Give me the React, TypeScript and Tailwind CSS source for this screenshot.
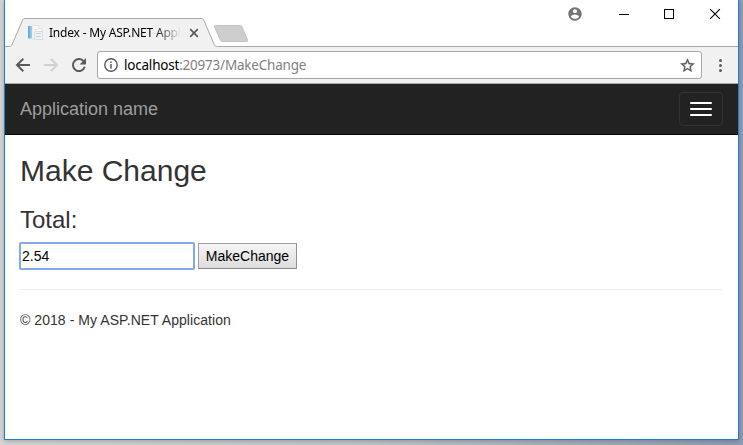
function TabStrip() {
  return (
    <div className="relative h-[47px] shrink-0 bg-white">
      <svg className="absolute inset-0" width="733" height="47" viewBox="5 0 733 47" fill="none">
        <path d="M5 47V46.5H9C11 46.5 11.6 45.6 12.3 44L22.5 20.3C23.1 19 23.6 18.5 25 18.5H201C202.6 18.5 203.2 19 203.8 20.3L214 44C214.8 45.8 215.4 46.5 217.5 46.5H738V47Z" fill="#f1f1f1" />
        <path d="M5 46.5H9C11 46.5 11.6 45.6 12.3 44L22.5 20.3C23.1 19 23.6 18.5 25 18.5H201C202.6 18.5 203.2 19 203.8 20.3L214 44C214.8 45.8 215.4 46.5 217.5 46.5H738" stroke="#a9a9a9" />
        <path d="M215.5 25.5H239.5C241 25.5 241.6 26 242.1 27L247.5 40C247.9 41 247.6 41.5 246.5 41.5H223C221.5 41.5 220.8 41 220.3 40L214.6 27C214.2 26 214.4 25.5 215.5 25.5Z" fill="#cecece" stroke="#c2c2c2" />
      </svg>
      <div className="relative flex h-[29px] w-[177px] translate-y-[18px] items-center pl-[23px]">
        <svg width="15" height="16" viewBox="0 0 15 16" className="shrink-0">
          <defs>
            <linearGradient id="spine" x1="0" y1="0" x2="1" y2="0">
              <stop offset="0" stopColor="#5ba4da" />
              <stop offset="1" stopColor="#a5d0ef" />
            </linearGradient>
          </defs>
          <path d="M4 .5h7l3 3V14H4z" fill="#f5f7f9" stroke="#e2e6ea" />
          <path d="M11 .5v3h3" fill="#fff" stroke="#d8dee3" />
          <rect x="0" y="1" width="4" height="12.5" fill="url(#spine)" />
          <path d="M5.5 4.5h4" stroke="#dbe1e6" />
          <rect x="6.5" y="6.5" width="8" height="8" fill="#f0f3f5" stroke="#d8dde2" />
          <path d="M8 8.5h5M8 11.5h5" stroke="#c8d0d7" />
        </svg>
        <span className="ml-[6px] shrink-0 whitespace-nowrap bg-linear-to-r from-black from-80% to-transparent bg-clip-text font-['Noto_Sans',sans-serif] text-[12px] leading-[16px] tracking-[-0.2px] text-transparent">
          Index - My ASP.NET Appl
        </span>
      </div>
      <svg className="absolute left-[184px] top-[28px]" width="10" height="10" viewBox="0 0 10 10">
        <path d="M1.2 1.2L8.8 8.8M8.8 1.2L1.2 8.8" stroke="#5a5a5a" strokeWidth="1.7" />
      </svg>
      <svg className="absolute left-[562px] top-[6px]" width="16" height="16" viewBox="0 0 24 24">
        <path fill="#757575" d="M12 2C6.48 2 2 6.48 2 12s4.48 10 10 10 10-4.48 10-10S17.52 2 12 2zm0 3c1.66 0 3 1.34 3 3s-1.34 3-3 3-3-1.34-3-3 1.34-3 3-3zm0 14.2c-2.5 0-4.71-1.28-6-3.22.03-1.99 4-3.08 6-3.08 1.99 0 5.97 1.09 6 3.08-1.29 1.94-3.5 3.22-6 3.22z" />
      </svg>
      <svg className="absolute left-[613px] top-[8px]" width="104" height="12" viewBox="0 0 104 12" fill="none" stroke="#000">
        <path d="M1 6.5h10" />
        <rect x="46.5" y="1.5" width="9" height="9" />
        <path d="M92.1 1.1l9.8 9.8M101.9 1.1l-9.8 9.8" strokeWidth="1.1" />
      </svg>
    </div>
  );
}

function Toolbar() {
  return (
    <div className="flex h-[37px] shrink-0 items-center border-b border-[#a9a9a9] bg-[#f1f1f1]">
      <svg width="92" height="36" viewBox="5 47 92 36" fill="none" strokeWidth="2" className="shrink-0">
        <path d="M30 65H17.5M23.3 58.7L17 65L23.3 71.3" stroke="#5a5a5a" />
        <path d="M44 65H56.5M50.7 58.7L57 65L50.7 71.3" stroke="#d2d2d2" />
        <path d="M83.8 61.5A6 6 0 1 0 84.7 66.7" stroke="#5a5a5a" />
        <path d="M86 58v6.4h-6.4z" fill="#5a5a5a" />
      </svg>
      <div className="flex h-[28px] w-[605px] items-center rounded-[3px] border border-[#a6a6a6] bg-white pl-[6px] pr-[5px]">
        <svg width="14" height="14" viewBox="0 0 14 14" fill="none" className="shrink-0">
          <circle cx="7" cy="7" r="6.2" stroke="#5a5a5a" strokeWidth="1.4" />
          <path d="M7 6v4.5M7 3.4v1.5" stroke="#5a5a5a" strokeWidth="1.5" />
        </svg>
        <span className="ml-[6px] grow font-['Noto_Sans',sans-serif] text-[13.5px] leading-[20px] tracking-[-0.21px] text-[#808080]">
          <span className="text-black">localhost</span>:20973/MakeChange
        </span>
        <svg width="17" height="17" viewBox="0 0 24 24" fill="#5a5a5a" stroke="#5a5a5a" strokeWidth="0.4" className="shrink-0">
          <path d="M22 9.24l-7.19-.62L12 2 9.19 8.63 2 9.24l5.46 4.73L5.82 21 12 17.27 18.18 21l-1.63-7.03L22 9.24zM12 15.4l-3.76 2.27 1-4.28-3.32-2.88 4.38-.38L12 6.1l1.71 4.04 4.38.38-3.32 2.88 1 4.28L12 15.4z" />
        </svg>
      </div>
      <div className="ml-[17px] flex flex-col gap-[2px]">
        <i className="size-[3px] rounded-full bg-[#5a5a5a]" />
        <i className="size-[3px] rounded-full bg-[#5a5a5a]" />
        <i className="size-[3px] rounded-full bg-[#5a5a5a]" />
      </div>
    </div>
  );
}

export default function App() {
  return (
    <div className="h-[445px] w-[743px] overflow-hidden bg-linear-to-r from-[#d6d6d8] via-[#bfc3ca] to-[#8f9cb3] pb-[5px] pl-[4px] pr-[4px] font-['Liberation_Sans',Arial,sans-serif]">
      <div className="flex h-[440px] w-[735px] flex-col border-x border-b border-[#1b80d4] bg-white shadow-[0_1px_5px_rgba(0,0,0,0.25)]">
        <TabStrip />
        <Toolbar />
        <nav className="flex h-[51px] shrink-0 items-center justify-between border-b border-[#080808] bg-[#222] px-[15px]">
          <a className="text-[18px] leading-[20px] text-[#9d9d9d]">Application name</a>
          <button className="flex h-[34px] w-[44px] flex-col items-center justify-center gap-[4px] rounded-[4px] border border-[#333]">
            <span className="h-[2px] w-[22px] rounded-[1px] bg-white" />
            <span className="h-[2px] w-[22px] rounded-[1px] bg-white" />
            <span className="h-[2px] w-[22px] rounded-[1px] bg-white" />
          </button>
        </nav>
        <main className="px-[15px] text-[14px] leading-[20px] text-[#333]">
          <h2 className="mt-[19px] text-[30px] leading-[33px]">Make Change</h2>
          <h3 className="mt-[20px] text-[24px] leading-[26px]">Total:</h3>
          <div className="mt-[9px] flex gap-[3px] text-black">
            <input
              type="text"
              defaultValue="2.54"
              className="-ml-px h-[28px] w-[176px] rounded-[2px] border-2 border-[#82a9ea] bg-white px-[1px] outline-none"
            />
            <button className="mt-[1px] h-[26px] w-[99px] border border-[#a0a0a0] border-b-[#888] border-r-[#909090] bg-linear-to-b from-[#f5f5f5] to-[#dddddd]">
              MakeChange
            </button>
          </div>
          <hr className="mt-[19px] border-[#eee]" />
          <footer className="mt-[20px] tracking-[0.06px]">© 2018 - My ASP.NET Application</footer>
        </main>
      </div>
    </div>
  );
}
